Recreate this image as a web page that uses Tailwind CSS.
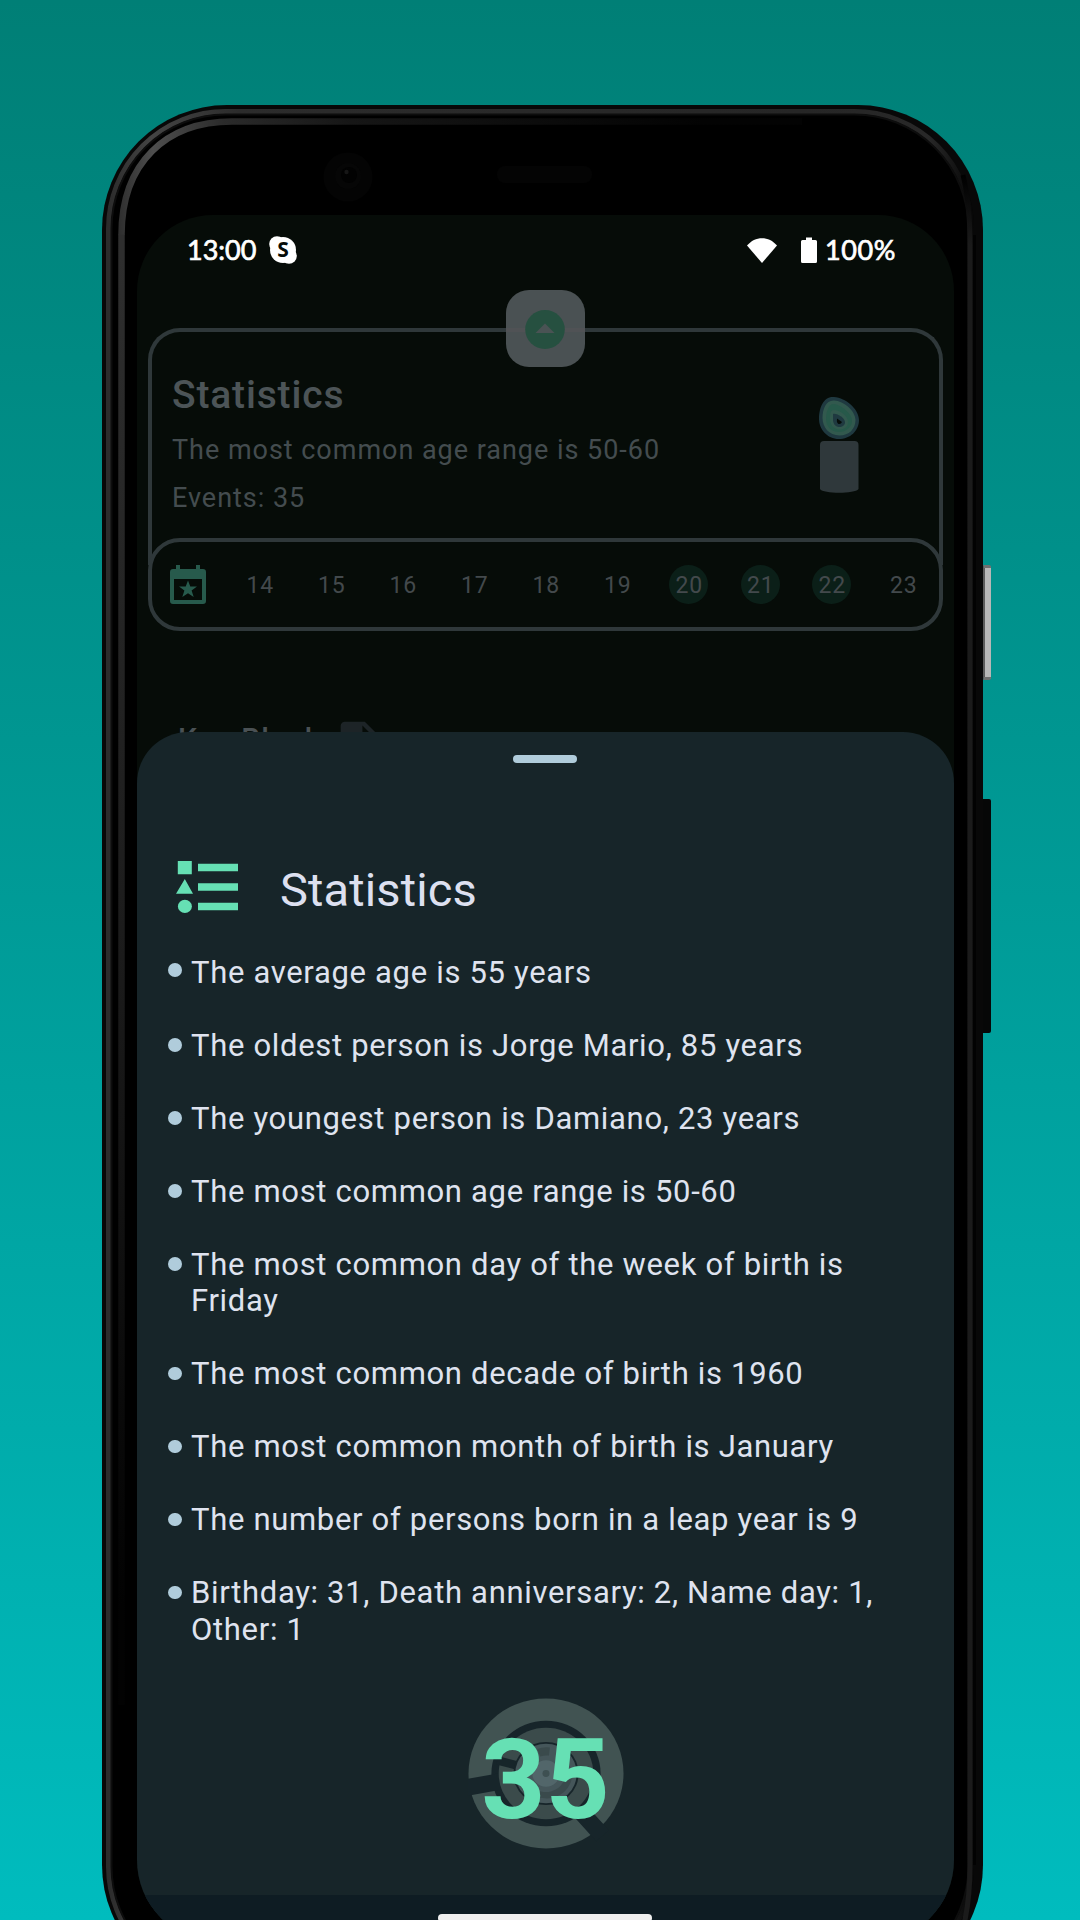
<!DOCTYPE html>
<html lang="en">
<head>
<meta charset="utf-8">
<title>Statistics</title>
<script src="https://cdn.jsdelivr.net/npm/@tailwindcss/browser@4"></script>
</head>
<body class="font-['Roboto',sans-serif]">
<main class="relative flex h-[1920px] w-[1080px] overflow-hidden bg-linear-to-b from-[#007f76] to-[#00bcbe] pt-[105px] pl-[102px]">

  <!-- phone -->
  <div class="relative h-[1885px] w-[881px] shrink-0 rounded-[125px] bg-[#080808] pt-[110px] pl-[35px]">
    <!-- side buttons -->
    <div class="absolute top-[460px] left-[881px] h-[115px] w-2 rounded-r-[2px] border-y-[3px] border-l-2 border-y-[#6f6f6f] border-l-[#5a5a5a] bg-[#b7b7b7]"></div>
    <div class="absolute top-[694px] left-[881px] h-[234px] w-2 rounded-r-[2px] bg-[#060707]"></div>

    <!-- bezel -->
    <svg class="absolute top-0 left-0" width="881" height="1885" viewBox="0 0 881 1885" fill="none">
      <defs>
        <linearGradient id="rim" x1="0" y1="0" x2="1" y2="0">
          <stop offset="0" stop-color="#2c2c2c"/><stop offset=".05" stop-color="#444"/><stop offset=".15" stop-color="#2c2c2c"/><stop offset=".8" stop-color="#262626"/><stop offset=".95" stop-color="#282828"/><stop offset="1" stop-color="#080808"/>
        </linearGradient>
        <linearGradient id="inner" gradientUnits="userSpaceOnUse" x1="16" y1="0" x2="600" y2="0">
          <stop offset="0" stop-color="#2e2e2e"/><stop offset=".06" stop-color="#4e4e4e"/><stop offset=".18" stop-color="#2b2b2b"/><stop offset=".4" stop-color="#161616"/><stop offset="1" stop-color="#030303"/>
        </linearGradient>
        <linearGradient id="down" gradientUnits="userSpaceOnUse" x1="0" y1="150" x2="0" y2="1500">
          <stop offset="0" stop-color="#2e2e2e"/><stop offset=".5" stop-color="#1c1c1c"/><stop offset="1" stop-color="#020202"/>
        </linearGradient>
        <linearGradient id="edge" gradientUnits="userSpaceOnUse" x1="0" y1="70" x2="0" y2="140">
          <stop offset="0" stop-color="#000"/><stop offset="1" stop-color="#1b1b1b"/>
        </linearGradient>
      </defs>
      <rect x="4" y="4" width="868" height="1877" rx="120" fill="#020202"/>
      <rect x="6.500" y="6.500" width="863" height="1872" rx="117" stroke="url(#rim)" stroke-width="5"/>
      <rect x="9.500" y="9.500" width="857" height="1866" rx="114" fill="#000" stroke="#0d0d0d" stroke-width="2"/>
      <path d="M19.500 130C19.500 58 64 16.500 130 16.500H700" stroke="url(#inner)" stroke-width="6.500"/>
      <path d="M19.500 129.500V1600" stroke="url(#down)" stroke-width="6.500"/>
      <path d="M861 70C866 90 868 110 868 140V1760C868 1800 862 1830 850 1855" stroke="url(#edge)" stroke-width="5"/>
      <path d="M872.500 130V1760" stroke="#020202" stroke-width="3"/>
      <circle cx="246" cy="72" r="24.500" fill="#040404"/>
      <circle cx="246" cy="71" r="13" fill="#060606"/>
      <circle cx="247" cy="70" r="8" fill="#020202"/>
      <circle cx="244.500" cy="67" r="2.200" fill="#161616"/>
      <rect x="395" y="61" width="95" height="17" rx="8" fill="#040404"/>
    </svg>

    <!-- screen -->
    <div class="relative h-[1727px] w-[817px] overflow-hidden rounded-t-[76px] rounded-b-[82px] bg-[#060c08]">
      <header class="flex h-[70px] items-center pr-[58px] pl-[50px] font-['Lato',sans-serif] text-[27px] leading-none text-white">
        <span class="-mt-[2px] [-webkit-text-stroke:0.7px_white]">13:00</span>
        <svg class="ml-[13px]" width="28" height="28" viewBox="0 0 28 28">
          <g fill="#fff"><circle cx="8" cy="8" r="7.800"/><circle cx="20" cy="20" r="7.800"/><circle cx="14" cy="14" r="13"/></g>
          <text x="14" y="21.300" text-anchor="middle" fill="#060c08" class="font-['Open_Sans',sans-serif] text-[21px] font-bold">S</text>
        </svg>
        <svg class="ml-auto" width="30" height="25" viewBox="0 0 30 25"><path d="M15 25L0 7.500C8 -2.300 22 -2.300 30 7.500Z" fill="#fff"/></svg>
        <svg class="ml-[24px]" width="16" height="27" viewBox="0 0 16 27"><path d="M5 0.500H11V3H14.500Q16 3 16 4.500V24.500Q16 26 14.500 26H1.500Q0 26 0 24.500V4.500Q0 3 1.500 3H5Z" fill="#fff"/></svg>
        <span class="-mt-[2px] ml-[8px] tracking-[0.6px] [-webkit-text-stroke:0.7px_white]">100%</span>
      </header>

      <!-- summary card -->
      <section class="relative mt-[43px] ml-[11px] flex h-[237px] w-[795px] items-start justify-between rounded-t-[32px] border-4 border-b-0 border-[#2f383a] pt-[39px] pr-[80px] pl-[20px] text-[#444c4f]">
        <div>
          <h2 class="text-[39px] leading-[48px] font-medium tracking-[0.83px] text-[#4c5457]">Statistics</h2>
          <p class="mt-[7px] text-[27px] leading-[48px] tracking-[0.97px]">The most common age range is 50-60</p>
          <p class="text-[27px] leading-[48px] tracking-[0.97px]">Events: 35</p>
        </div>
        <svg class="mt-[25px]" width="40" height="98" viewBox="0 0 40 98">
          <path d="M15 1C27 2 40 13 40 24C40 35 31 43 20 43C8 43 0 33 0 23C0 11 5 0 15 1Z" fill="#1f3940"/>
          <path d="M15 4.500C25 5 36.500 15 36.500 24C36.500 33 30 39.500 20.500 39.500C10 39.500 3.500 31 3.500 22C3.500 13 7 4 15 4.500Z" fill="#32594e"/>
          <path d="M15.500 8C24 10 33 18 33 25C33 31 27 36 20 36C12 36 7 30 7 23C7 15 10 7 15.500 8Z" fill="#27594a"/>
          <path d="M14.500 14C21 14 29 20 29 26C29 31 25 33.500 20.500 33.500C14 33.500 11 28 11 23C11 18 11.500 14 14.500 14Z" fill="#32594e"/>
          <path d="M14 18C18 17 26 22 26 26.500C26 29 23.500 31 20 31C16 31 14 27 14 24Z" fill="#1f3940"/>
          <path d="M18 22.500L23 26Q22 28.500 19.500 28Q17.500 27 18 22.500Z" fill="#060c08"/>
          <path d="M1 49Q1 45 5 45H35.500Q39.500 45 39.500 49V93C36 98 4 98 1 93Z" fill="#2f383b"/>
        </svg>
        <!-- collapse badge -->
        <div class="absolute -top-[42px] left-[353.500px] flex h-[77px] w-[79px] items-center justify-center rounded-[23px] bg-[#4a5153]">
          <div class="absolute top-[38px] left-0 h-1 w-full bg-[#505255]"></div>
          <svg class="relative mt-[2px]" width="40" height="39" viewBox="0 0 40 39"><ellipse cx="20" cy="19.500" rx="19.800" ry="19.400" fill="#265040"/><path d="M10.500 23L20 13.500L29.500 23Z" fill="#4a5354"/></svg>
        </div>
      </section>

      <!-- date strip -->
      <section class="relative -mt-[27px] ml-[11px] grid h-[93px] w-[795px] grid-cols-11 items-center justify-items-center rounded-[32px] border-4 border-[#2f383a] bg-[#060c08] pl-[0.500px] text-[23px] leading-[28px] tracking-[0.8px] text-[#43494c]">
        <svg width="36" height="39" viewBox="0 0 36 39"><path fill="#275a4c" fill-rule="evenodd" d="M6 0H10V4H26V0H30V4H33Q36 4 36 7V36Q36 39 33 39H3Q0 39 0 36V7Q0 4 3 4H6ZM4 14V35H32V14ZM18 15.500L20.300 21.500H27L21.600 25.500L23.700 32L18 28.200L12.300 32L14.400 25.500L9 21.500H15.700Z"/></svg>
        <span class="pt-[3px] pl-px">14</span><span class="pt-[3px] pl-px">15</span><span class="pt-[3px] pl-px">16</span><span class="pt-[3px] pl-px">17</span><span class="pt-[3px] pl-px">18</span><span class="pt-[3px] pl-px">19</span>
        <span class="flex size-[39px] items-center justify-center rounded-full bg-[#0b1f18] pt-[3px] pl-px">20</span>
        <span class="flex size-[39px] items-center justify-center rounded-full bg-[#0b1f18] pt-[3px] pl-px">21</span>
        <span class="flex size-[39px] items-center justify-center rounded-full bg-[#0b1f18] pt-[3px] pl-px">22</span>
        <span class="pt-[3px] pl-px">23</span>
      </section>

      <!-- first contact row, mostly behind the sheet -->
      <div class="mt-[91px] ml-[41px] flex">
        <span class="-mt-[3px] text-[30px] leading-[40px] font-medium tracking-[1.1px] text-[#4a5154]">Ken Block</span>
        <svg class="-mt-[5px] ml-[9px]" width="58" height="58" viewBox="0 0 24 24"><path fill="#1d2427" d="M6 2c-1.100 0-2 .5-2 2v16c0 1.100.9 2 2 2h12c1.100 0 2-.9 2-2V8l-6-6H6zm7 7V3.500L18.500 9H13z"/></svg>
      </div>

      <!-- bottom sheet -->
      <section class="absolute top-[517px] left-0 flex h-[1210px] w-full flex-col rounded-t-[51px] bg-[#172529] text-[#dfe3ef]">
        <div class="mt-[23px] ml-[376px] h-2 w-16 shrink-0 rounded-full bg-[#b0ccdb]"></div>
        <div class="mt-[98px] flex items-start pl-[39px]">
          <svg class="h-[52px] w-[62px]" viewBox="0 0 62 52" fill="#66e0b4"><path d="M1.800 0H15.800V13.200H1.800ZM8.800 18L17 32.800H0ZM22 2.800H62V10.200H22ZM22 22.200H62V29.800H22ZM22 41.800H62V49.200H22Z"/><ellipse cx="8.900" cy="45.400" rx="7" ry="6.600"/></svg>
          <h1 class="ml-[42px] text-[47px] leading-[57px] tracking-[0.12px] text-[#dde0f0]">Statistics</h1>
        </div>
        <ul class="mt-[36.500px] flex flex-col gap-[36.500px] pr-[38px] pl-[31px] text-[31px] leading-[36.500px] tracking-[0.68px]">
          <li class="flex gap-[9px]"><i class="mt-[8.500px] h-[13.500px] w-[14px] shrink-0 rounded-full bg-[#b0ccdb]"></i><span>The average age is 55 years</span></li>
          <li class="flex gap-[9px]"><i class="mt-[10.500px] h-[13.500px] w-[14px] shrink-0 rounded-full bg-[#b0ccdb]"></i><span>The oldest person is Jorge Mario, 85 years</span></li>
          <li class="flex gap-[9px]"><i class="mt-[10.500px] h-[13.500px] w-[14px] shrink-0 rounded-full bg-[#b0ccdb]"></i><span>The youngest person is Damiano, 23 years</span></li>
          <li class="flex gap-[9px]"><i class="mt-[10.500px] h-[13.500px] w-[14px] shrink-0 rounded-full bg-[#b0ccdb]"></i><span>The most common age range is 50-60</span></li>
          <li class="flex gap-[9px]"><i class="mt-[10.500px] h-[13.500px] w-[14px] shrink-0 rounded-full bg-[#b0ccdb]"></i><span>The most common day of the week of birth is Friday</span></li>
          <li class="flex gap-[9px]"><i class="mt-[10.500px] h-[13.500px] w-[14px] shrink-0 rounded-full bg-[#b0ccdb]"></i><span>The most common decade of birth is 1960</span></li>
          <li class="flex gap-[9px]"><i class="mt-[10.500px] h-[13.500px] w-[14px] shrink-0 rounded-full bg-[#b0ccdb]"></i><span>The most common month of birth is January</span></li>
          <li class="flex gap-[9px]"><i class="mt-[10.500px] h-[13.500px] w-[14px] shrink-0 rounded-full bg-[#b0ccdb]"></i><span>The number of persons born in a leap year is 9</span></li>
          <li class="flex gap-[9px]"><i class="mt-[10.500px] h-[13.500px] w-[14px] shrink-0 rounded-full bg-[#b0ccdb]"></i><span>Birthday: 31, Death anniversary: 2, Name day: 1, Other: 1</span></li>
        </ul>
        <div class="relative mx-auto mt-[50px] flex h-[151px] w-[156px] items-center justify-center">
          <svg class="absolute inset-0" width="156" height="151" viewBox="-80 -80 160 160" preserveAspectRatio="none">
            <circle r="79.500" fill="#415352"/>
            <circle r="56" fill="#17252a"/>
            <path d="M-45 8.200L-84 15.300M33 37.500L58 66" stroke="#17252a" stroke-width="17.500"/>
            <circle r="48.500" fill="#3b4b4b"/>
            <path d="M-28 -8L-50 -14" stroke="#17252a" stroke-width="9"/>
            <circle r="33.500" fill="#17252a"/>
            <circle r="31.500" fill="#45565a"/>
            <path d="M-9 -26A28 28 0 0 1 4 -27.500L3 -19A19 19 0 0 0 -6 -18Z" fill="#3a4a4c"/>
            <path d="M-16 20A26 26 0 0 0 27 2L20 0A20 20 0 0 1 -10 17Z" fill="#3a4a4c"/>
            <circle r="14" fill="#52666a"/>
            <circle r="3.600" fill="#3e5052"/>
          </svg>
          <span class="relative mt-[13px] text-[112px] leading-none font-bold text-[#66e0b4]">35</span>
        </div>
        <!-- gesture bar -->
        <footer class="mt-auto flex h-[47px] shrink-0 bg-[#0e1c23] pt-[19px] pl-[301px]">
          <div class="h-2 w-[214px] rounded-full bg-[#efefef]"></div>
        </footer>
      </section>
    </div>
  </div>
</main>
</body>
</html>
